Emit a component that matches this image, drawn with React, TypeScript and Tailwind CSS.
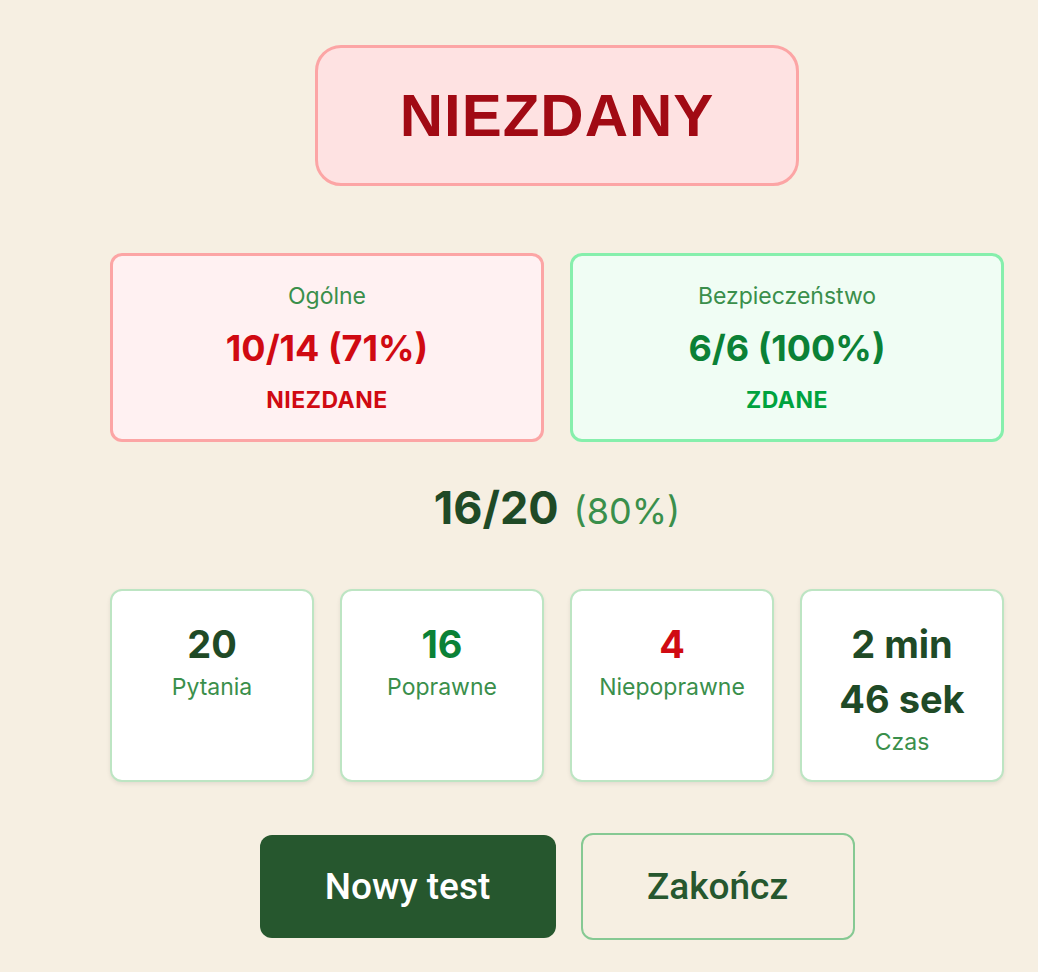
export default function App() {
  const stats = [
    { value: "20", label: "Pytania", color: "text-[#1f4a26]" },
    { value: "16", label: "Poprawne", color: "text-[#0b8136]" },
    { value: "4", label: "Niepoprawne", color: "text-[#d00a12]" },
    { value: "2 min 46 sek", label: "Czas", color: "text-[#1f4a26]" },
  ];

  return (
    <main className="min-h-screen bg-[#f6efe2] pl-[110px] pr-[34px] pt-[45px] font-['Inter',sans-serif]">
      <div className="flex w-[894px] flex-col items-center">
        <div className="flex h-[141px] w-[484px] items-center justify-center rounded-[26px] border-[3px] border-[#fca5a5] bg-[#fee2e2]">
          <span className="font-['Liberation_Sans',Arial,sans-serif] text-[60px] font-bold tracking-[1px] text-[#a10a14]">
            NIEZDANY
          </span>
        </div>

        <div className="mt-[67px] grid w-full grid-cols-2 gap-[26px]">
          <div className="flex h-[189px] flex-col items-center justify-center rounded-[12px] border-[3px] border-[#fca5a5] bg-[#fff1f2]">
            <div className="text-[23px] leading-[30px] text-[#3a8f4b]">Ogólne</div>
            <div className="mt-[15px] text-[36px] font-bold leading-[44px] text-[#d00a12]">10/14 (71%)</div>
            <div className="mt-[15px] text-[23px] font-bold leading-[30px] tracking-[0.5px] text-[#d00a12]">NIEZDANE</div>
          </div>
          <div className="flex h-[189px] flex-col items-center justify-center rounded-[12px] border-[3px] border-[#86efac] bg-[#f0fdf4]">
            <div className="text-[23px] leading-[30px] text-[#3a8f4b]">Bezpieczeństwo</div>
            <div className="mt-[15px] text-[36px] font-bold leading-[44px] text-[#0b8136]">6/6 (100%)</div>
            <div className="mt-[15px] text-[23px] font-bold leading-[30px] tracking-[0.5px] text-[#00a33e]">ZDANE</div>
          </div>
        </div>

        <div className="mt-[38px] flex items-baseline gap-[15px]">
          <span className="text-[45px] font-bold leading-[56px] text-[#1f4a26]">16/20</span>
          <span className="text-[36px] leading-[40px] text-[#3a8f4b]">(80%)</span>
        </div>

        <div className="mt-[53px] grid w-full grid-cols-4 gap-[26px]">
          {stats.map((s) => (
            <div
              key={s.label}
              className="flex h-[193px] flex-col items-center rounded-[12px] border-2 border-[#bde5c3] bg-white px-7 pt-[26px] text-center shadow-[0_2px_4px_rgba(0,0,0,0.08)]"
            >
              <div className={`text-[38px] font-bold leading-[55px] ${s.color}`}>{s.value}</div>
              <div className="text-[23px] leading-[30px] text-[#3a8f4b]">{s.label}</div>
            </div>
          ))}
        </div>

        <div className="mt-[51px] flex items-center gap-[25px] font-['Roboto',sans-serif]">
          <button className="flex h-[103px] w-[296px] items-center justify-center rounded-[12px] bg-[#26572e] text-[37px] font-medium text-white">
            Nowy test
          </button>
          <button className="flex h-[107px] w-[274px] items-center justify-center rounded-[12px] border-2 border-[#86c993] text-[37px] font-medium text-[#26572e]">
            Zakończ
          </button>
        </div>
      </div>
    </main>
  );
}
